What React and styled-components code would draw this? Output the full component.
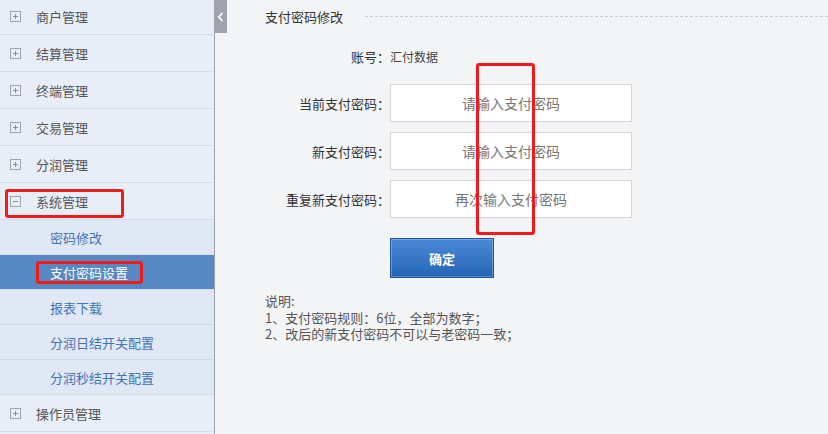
import React from "react";
import styled, { createGlobalStyle } from "styled-components";

const Global = createGlobalStyle`
  html, body { margin: 0; padding: 0; }
  body {
    width: 828px; height: 434px; overflow: hidden;
    font-family: "Noto Sans CJK SC", "Microsoft YaHei", sans-serif;
    background: #f3f4f6;
  }
  * { box-sizing: border-box; }
`;

const Page = styled.div`
  display: flex;
  width: 828px;
  height: 434px;
  overflow: hidden;
  position: relative;
`;

const Sidebar = styled.nav`
  width: 215px;
  flex: none;
  height: 436px;
  background: #e8eef7;
  border-right: 1px solid #9aa3ad;
  display: flex;
  flex-direction: column;
  margin-top: -2px;
`;

const MenuRow = styled.div`
  height: 37px;
  flex: none;
  display: flex;
  align-items: center;
  padding-left: 10px;
  border-bottom: 1px solid #d3dce8;
  font-size: 13px;
  color: #555;
  position: relative;
`;

const Toggle = styled.span`
  width: 11px;
  height: 11px;
  border: 1px solid #a0a4a8;
  position: relative;
  margin-right: 15px;
  flex: none;
  &::before {
    content: "";
    position: absolute;
    left: 2px; right: 2px; top: 4px;
    height: 1px;
    background: #8a8e92;
  }
  &::after {
    content: "";
    display: ${(p) => (p.$open ? "none" : "block")};
    position: absolute;
    top: 2px; bottom: 2px; left: 4px;
    width: 1px;
    background: #8a8e92;
  }
`;

const SubRow = styled.div`
  height: 35px;
  flex: none;
  display: flex;
  align-items: center;
  padding-left: 50px;
  border-bottom: 1px solid #d0d9e6;
  background: ${(p) => (p.$active ? "#5688c3" : "#dfe8f4")};
  color: ${(p) => (p.$active ? "#fff" : "#3f74b8")};
  font-size: 13px;
  position: relative;
`;

const RedBox = styled.span`
  position: absolute;
  border: 3px solid #ee1c1c;
  border-radius: 3px;
  pointer-events: none;
`;

const CollapseTab = styled.div`
  position: absolute;
  left: 214px;
  top: 0;
  width: 13px;
  height: 33px;
  background: #9ea4ab;
  display: flex;
  align-items: center;
  justify-content: center;
`;

const Main = styled.main`
  flex: 1;
  padding-left: 50px;
  position: relative;
`;

const TitleBar = styled.div`
  display: flex;
  align-items: center;
  height: 32px;
  font-size: 13px;
  color: #333;
`;

const DashLine = styled.div`
  flex: 1;
  margin-left: 22px;
  border-top: 1px dashed #c8cacd;
`;

const Form = styled.div`
  display: flex;
  flex-direction: column;
  margin-top: 7px;
`;

const FieldRow = styled.div`
  display: flex;
  align-items: center;
  height: ${(p) => p.$h || 38}px;
  margin-bottom: ${(p) => p.$mb || 10}px;
`;

const Label = styled.div`
  width: 125px;
  text-align: right;
  font-size: 13px;
  color: #333;
  flex: none;
`;

const Value = styled.div`
  font-size: 12px;
  color: #444;
`;

const Input = styled.input`
  width: 242px;
  height: 38px;
  border: 1px solid #d2d4d7;
  background: #fff;
  text-align: center;
  font-family: inherit;
  font-size: 14px;
  outline: none;
  &::placeholder { color: #777; }
`;

const Button = styled.button`
  margin-left: 125px;
  width: 104px;
  height: 40px;
  border: 1px solid #1f55a0;
  background: linear-gradient(#4a8ad6, #2565b6);
  box-shadow: inset 0 0 0 1px rgba(255,255,255,0.25);
  color: #fff;
  font-weight: bold;
  font-size: 13px;
  font-family: inherit;
`;

const Notes = styled.div`
  margin-top: 15px;
  font-size: 13px;
  color: #555;
`;

const NoteLine = styled.div`
  height: 16.5px;
  line-height: 16.5px;
`;

const topItems = ["商户管理", "结算管理", "终端管理", "交易管理", "分润管理"];
const subItems = ["密码修改", "支付密码设置", "报表下载", "分润日结开关配置", "分润秒结开关配置"];

export default function App() {
  return (
    <>
      <Global />
      <Page>
        <Sidebar>
          {topItems.map((t) => (
            <MenuRow key={t}>
              <Toggle />
              {t}
            </MenuRow>
          ))}
          <MenuRow>
            <Toggle $open />
            系统管理
            <RedBox style={{ left: 5, top: 6, width: 119, height: 29 }} />
          </MenuRow>
          {subItems.map((t, i) => (
            <SubRow key={t} $active={i === 1}>
              {t}
              {i === 1 && <RedBox style={{ left: 36, top: 6, width: 107, height: 23 }} />}
            </SubRow>
          ))}
          <MenuRow>
            <Toggle />
            操作员管理
          </MenuRow>
        </Sidebar>
        <CollapseTab>
          <svg width="7" height="10" viewBox="0 0 7 10">
            <path d="M5.5 1 L1.8 5 L5.5 9" stroke="#fff" strokeWidth="1.8" fill="none" />
          </svg>
        </CollapseTab>
        <Main>
          <TitleBar>
            支付密码修改
            <DashLine />
          </TitleBar>
          <Form>
            <FieldRow $h={34} $mb={11}>
              <Label>账号：</Label>
              <Value>汇付数据</Value>
            </FieldRow>
            <FieldRow>
              <Label>当前支付密码：</Label>
              <Input placeholder="请输入支付密码" />
            </FieldRow>
            <FieldRow>
              <Label>新支付密码：</Label>
              <Input placeholder="请输入支付密码" />
            </FieldRow>
            <FieldRow $mb={20}>
              <Label>重复新支付密码：</Label>
              <Input placeholder="再次输入支付密码" />
            </FieldRow>
            <div>
              <Button>确定</Button>
            </div>
            <Notes>
              <NoteLine>说明:</NoteLine>
              <NoteLine>1、支付密码规则：6位，全部为数字；</NoteLine>
              <NoteLine>2、改后的新支付密码不可以与老密码一致；</NoteLine>
            </Notes>
          </Form>
          <RedBox style={{ left: 261, top: 63, width: 59, height: 172 }} />
        </Main>
      </Page>
    </>
  );
}
